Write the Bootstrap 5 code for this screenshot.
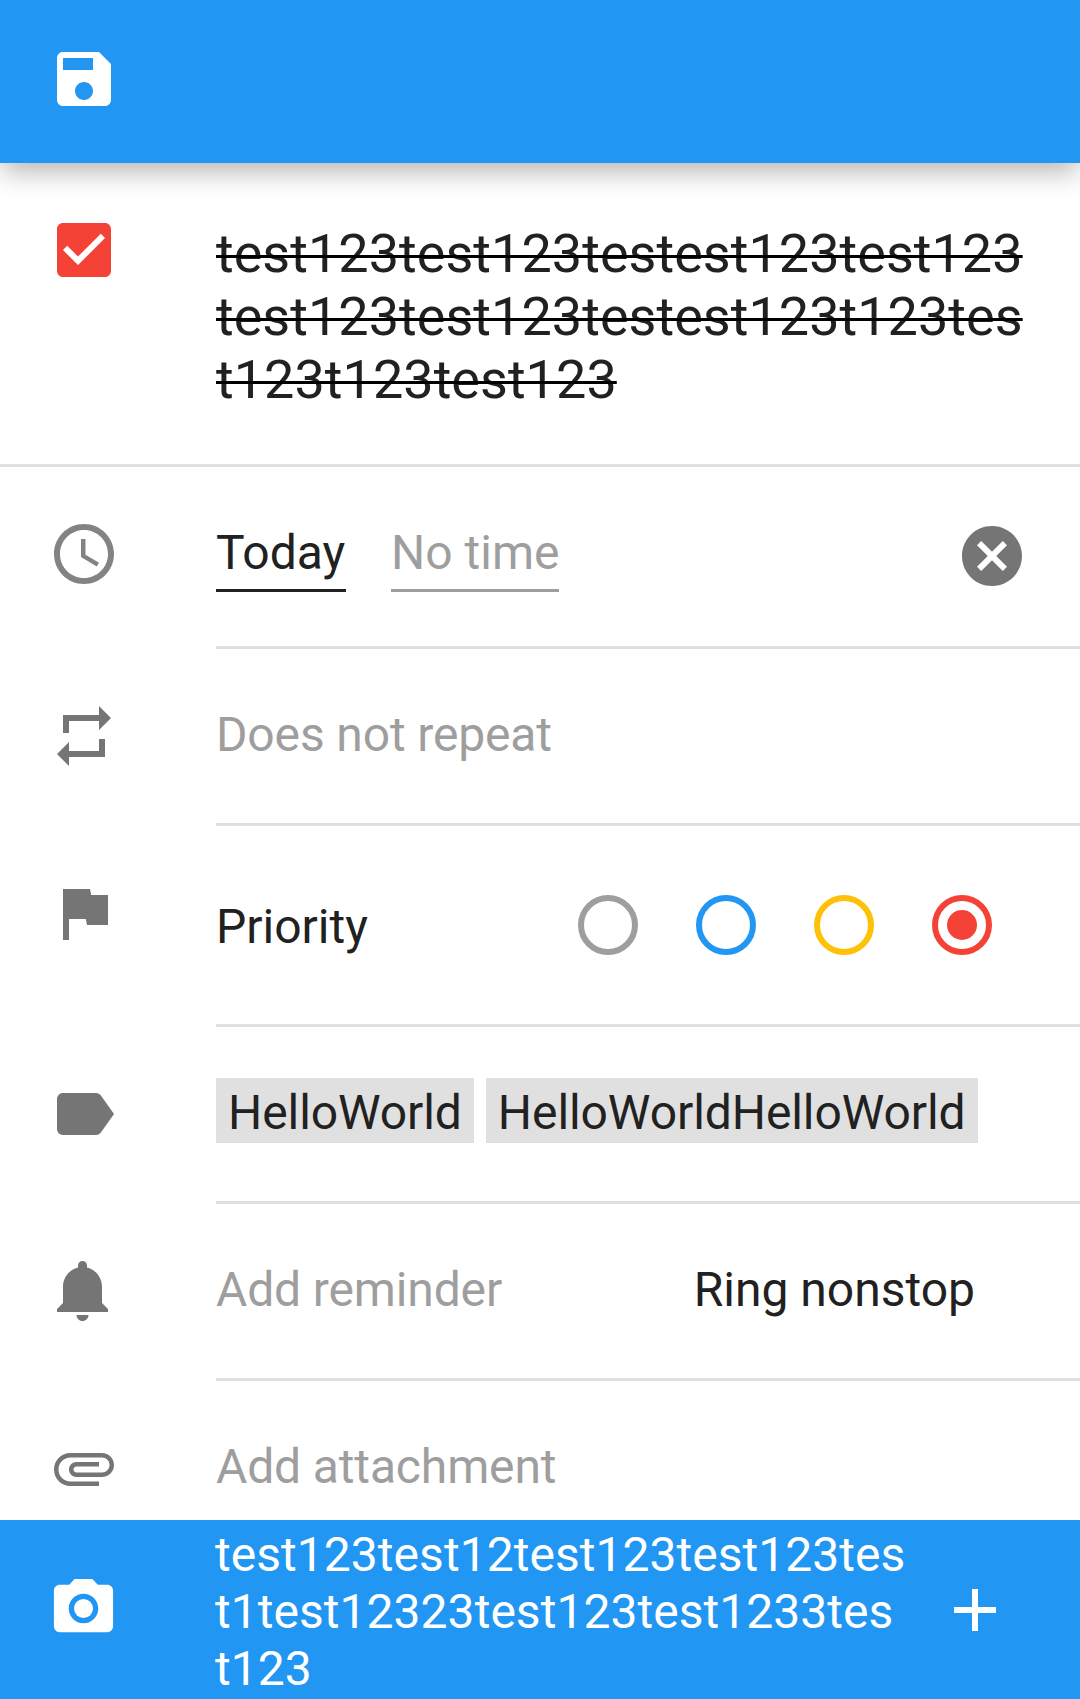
<!DOCTYPE html>
<html lang="en">
<head>
<meta charset="utf-8">
<meta name="viewport" content="width=device-width, initial-scale=1">
<title>Edit task</title>
<link href="https://cdn.jsdelivr.net/npm/bootstrap@5.3.0/dist/css/bootstrap.min.css" rel="stylesheet">
<style>
  body { font-family: Roboto, "Liberation Sans", sans-serif; font-size: 48px; line-height: 57px; color: #212121; background: #fff; }
  .screen { height: 1699px; }
  .ico { width: 72px; height: 72px; fill: currentColor; flex: none; display: block; }
  .app-bar { height: 163px; padding: 43px 48px 0; background: #2196f3; box-shadow: 0 10px 26px -2px rgba(0,0,0,.3); z-index: 2; }
  .task-head { height: 304px; padding: 51px 48px 0; border-bottom: 3px solid #e0e0e0; }
  .task-title { margin: 8px 0 0 96px; font-size: 54px; line-height: 63px; font-weight: 400; white-space: nowrap; letter-spacing: .03px; }
  /* the larger outer size lowers the strike line slightly */
  .struck { font-size: 56px; line-height: 1; text-decoration: line-through #000 3px; }
  .struck > span { font-size: 54px; line-height: 63px; }
  .field { padding-left: 48px; color: #757575; }
  .field > .ico { margin-top: 51px; }
  .field-body { margin-left: 96px; border-bottom: 3px solid #e0e0e0; color: #212121; }
  .hint { color: #9e9e9e; }
  .snug { letter-spacing: -.14px; }
  .red { color: #f44336; }
  .f-date { height: 182px; }
  .f-date .field-body { padding: 57px 52px 0 0; gap: 45px; }
  .f-date .field-body .ico { color: #757575; margin-top: -4px; }
  .pick { height: 68px; min-width: 130px; border-bottom: 3px solid currentColor; }
  .f-repeat { height: 177px; }
  .f-repeat .field-body { padding-top: 57px; }
  .f-prio { height: 201px; }
  .f-prio .field-body { padding: 72px 88px 0 0; }
  .prio-set { gap: 58px; margin-top: -3px; }
  .dot-pick { width: 60px; height: 60px; border: 6px solid; border-radius: 50%; }
  .dot-pick i { width: 30px; height: 30px; border-radius: 50%; background: currentColor; }
  .dot-none { color: #9e9e9e; }
  .dot-low { color: #2196f3; }
  .dot-mid { color: #ffc107; }
  .f-tags { height: 177px; }
  .f-tags .field-body { padding-top: 51px; gap: 12px; }
  .tag { height: 65px; padding: 6px 12px 0; background: #e0e0e0; letter-spacing: -.08px; }
  .f-rem { height: 177px; }
  .f-rem .field-body { padding: 57px 105px 0 0; }
  .f-att { height: 139px; }
  .f-att .field-body { padding-top: 57px; border: 0; }
  .comment-bar { height: 179px; background: #2196f3; color: #fff; padding: 6px 69px 0 48px; }
  .comment-bar .ico { margin-top: 48px; }
  .comment-bar .ico-cam { width: 71px; height: 71px; margin: 47.4px 1px 0 0; }
  .comment-text { margin-left: 95px; white-space: nowrap; letter-spacing: .04px; }
</style>
<script src="https://cdn.jsdelivr.net/npm/bootstrap@5.3.0/dist/js/bootstrap.bundle.min.js"></script>
</head>
<body>
<div class="screen d-flex flex-column overflow-hidden">
  <header class="app-bar d-flex align-items-start position-relative text-white">
    <svg class="ico" viewBox="0 0 24 24"><path d="M17 3H5c-1.110 0-2 .9-2 2v14c0 1.100.89 2 2 2h14c1.100 0 2-.9 2-2V7l-4-4zm-5 16c-1.660 0-3-1.340-3-3s1.340-3 3-3 3 1.340 3 3-1.340 3-3 3zm3-10H5V5h10v4z"/></svg>
  </header>

  <section class="task-head d-flex align-items-start">
    <svg class="ico red" viewBox="0 0 24 24"><path d="M19 3H5c-1.110 0-2 .9-2 2v14c0 1.100.89 2 2 2h14c1.110 0 2-.9 2-2V5c0-1.100-.89-2-2-2zm-9 14l-5-5 1.410-1.410L10 14.170l7.590-7.590L19 8l-9 9z"/></svg>
    <h1 class="task-title"><span class="struck"><span>test123test123testest123test123<br>test123test123testest123t123tes<br>t123t123test123</span></span></h1>
  </section>

  <main>
    <div class="field f-date d-flex align-items-start">
      <svg class="ico" viewBox="0 0 24 24"><path fill-opacity=".9" d="M11.990 2C6.470 2 2 6.480 2 12s4.470 10 9.990 10C17.520 22 22 17.520 22 12S17.520 2 11.990 2zM12 20c-4.420 0-8-3.580-8-8s3.580-8 8-8 8 3.580 8 8-3.580 8-8 8zm.5-13H11v6l5.250 3.150.75-1.230-4.500-2.670z"/></svg>
      <div class="field-body d-flex align-items-start flex-grow-1 h-100">
        <span class="pick">Today</span>
        <span class="pick hint">No time</span>
        <svg class="ico ms-auto" viewBox="0 0 24 24"><path d="M12 2C6.470 2 2 6.470 2 12s4.470 10 10 10 10-4.470 10-10S17.530 2 12 2zm5 13.590L15.590 17 12 13.410 8.410 17 7 15.590 10.590 12 7 8.410 8.410 7 12 10.590 15.590 7 17 8.410 13.410 12 17 15.590z"/></svg>
      </div>
    </div>

    <div class="field f-repeat d-flex align-items-start">
      <svg class="ico" viewBox="0 0 24 24"><path d="M7 7h10v3l4-4-4-4v3H5v6h2V7zm10 10H7v-3l-4 4 4 4v-3h12v-6h-2v4z"/></svg>
      <div class="field-body flex-grow-1 h-100 hint snug">Does not repeat</div>
    </div>

    <div class="field f-prio d-flex align-items-start">
      <svg class="ico" viewBox="0 0 24 24"><path d="M14.400 6L14 4H5v17h2v-7h5.600l.4 2h7V6z"/></svg>
      <div class="field-body d-flex align-items-start flex-grow-1 h-100">
        <span>Priority</span>
        <div class="prio-set d-flex ms-auto">
          <span class="dot-pick dot-none"></span>
          <span class="dot-pick dot-low"></span>
          <span class="dot-pick dot-mid"></span>
          <span class="dot-pick red d-flex align-items-center justify-content-center"><i></i></span>
        </div>
      </div>
    </div>

    <div class="field f-tags d-flex align-items-start">
      <svg class="ico" viewBox="0 0 24 24"><path d="M17.630 5.840C17.270 5.330 16.670 5 16 5L5 5.010C3.900 5.010 3 5.900 3 7v10c0 1.100.9 1.990 2 1.990L16 19c.67 0 1.270-.33 1.630-.84L22 12l-4.370-6.160z"/></svg>
      <div class="field-body d-flex align-items-start flex-grow-1 h-100">
        <span class="tag">HelloWorld</span>
        <span class="tag">HelloWorldHelloWorld</span>
      </div>
    </div>

    <div class="field f-rem d-flex align-items-start">
      <svg class="ico" viewBox="0 0 24 24"><path d="M11.500 22c1.100 0 2-.9 2-2h-4c0 1.100.9 2 2 2zm6.500-6v-5.500c0-3.070-2.130-5.640-5-6.320V3.500c0-.83-.67-1.500-1.500-1.500S10 2.670 10 3.500v.68c-2.870.68-5 3.250-5 6.320V16l-2 2v1h17v-1l-2-2z"/></svg>
      <div class="field-body d-flex align-items-start justify-content-between flex-grow-1 h-100">
        <span class="hint snug">Add reminder</span>
        <span>Ring nonstop</span>
      </div>
    </div>

    <div class="field f-att d-flex align-items-start">
      <svg class="ico" viewBox="0 0 24 24"><path d="M7.500 18C4.460 18 2 15.540 2 12.500S4.460 7 7.500 7H18c2.210 0 4 1.790 4 4s-1.790 4-4 4H9.500C8.120 15 7 13.880 7 12.500S8.120 10 9.500 10H17v1.500H9.500c-.55 0-1 .45-1 1s.45 1 1 1H18c1.380 0 2.500-1.120 2.500-2.500S19.380 8.500 18 8.500H7.500c-2.210 0-4 1.790-4 4s1.790 4 4 4H17V18H7.500z"/></svg>
      <div class="field-body flex-grow-1 h-100 hint snug">Add attachment</div>
    </div>
  </main>

  <footer class="comment-bar d-flex align-items-start">
    <svg class="ico ico-cam" viewBox="0 0 24 24"><circle cx="12" cy="12" r="3.200"/><path d="M9 2L7.170 4H4c-1.100 0-2 .9-2 2v12c0 1.100.9 2 2 2h16c1.100 0 2-.9 2-2V6c0-1.100-.9-2-2-2h-3.170L15 2H9zm3 15c-2.760 0-5-2.240-5-5s2.240-5 5-5 5 2.240 5 5-2.240 5-5 5z"/></svg>
    <div class="comment-text">test123test12test123test123tes<br>t1test12323test123test1233tes<br>t123</div>
    <svg class="ico ms-auto" viewBox="0 0 24 24"><path d="M19 13h-6v6h-2v-6H5v-2h6V5h2v6h6v2z"/></svg>
  </footer>
</div>
</body>
</html>
